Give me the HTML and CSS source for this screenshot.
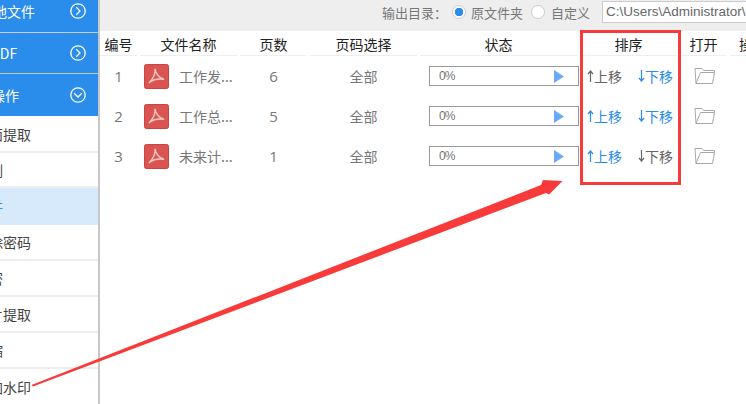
FILE: index.html
```html
<!DOCTYPE html>
<html lang="zh">
<head>
<meta charset="utf-8">
<title>PDF</title>
<link rel="stylesheet" href="styles.css">
</head>
<body>
<div class="app">
  <aside class="side">
    <div class="cat c1"><span class="clip">本地文件</span><svg class="chev" viewBox="0 0 16 16"><circle cx="8" cy="8" r="7.2"/><path d="M6.300 4.200 10 8l-3.700 3.800"/></svg></div>
    <div class="cat c2"><span class="clip">转PDF</span><svg class="chev" viewBox="0 0 16 16"><circle cx="8" cy="8" r="7.2"/><path d="M6.300 4.200 10 8l-3.700 3.800"/></svg></div>
    <div class="cat c3"><span class="clip">页操作</span><svg class="chev" viewBox="0 0 16 16"><circle cx="8" cy="8" r="7.2"/><path d="M4.200 6.300 8 10l3.800-3.700"/></svg></div>
    <div class="item tall"><span class="clip2">页面提取</span></div>
    <div class="item short"><span class="clip2">分割</span></div>
    <div class="item tall on"><span class="clip2">合并</span></div>
    <div class="item"><span class="clip2">解除密码</span></div>
    <div class="item"><span class="clip2">加密</span></div>
    <div class="item"><span class="clip2">图片提取</span></div>
    <div class="item"><span class="clip2">压缩</span></div>
    <div class="item last"><span class="clip2">添加水印</span></div>
  </aside>
  <main class="main">
    <div class="bar">
      <span class="lbl">输出目录：</span>
      <span class="radio sel"></span><span class="opt">原文件夹</span>
      <span class="radio"></span><span class="opt opt2">自定义</span>
      <span class="path">C:\Users\Administrator\Desktop</span>
    </div>
    <div class="grid head">
      <div class="h">编号</div><div class="h">文件名称</div><div class="h">页数</div><div class="h">页码选择</div><div class="h">状态</div><div class="h">排序</div><div class="h">打开</div><div class="h cut">操作</div>
    </div>
    <div class="grid row">
      <div class="num">1</div>
      <div class="file"><svg class="pdf" viewBox="0 0 26 26"><rect x=".5" y=".5" width="25" height="25" rx="2"/><path d="M5 20C9 16 12 10 11.500 5 12 10 16 15 21 16 15 15 10 16 6 19"/></svg><span>工作发...</span></div>
      <div class="num">6</div><div class="cell">全部</div>
      <div class="state"><div class="prog"><span class="pct">0%</span><svg class="play" viewBox="0 0 10 13"><path d="M0 0l10 6.500L0 13z"/></svg></div></div>
      <div class="sort">
        <span class="mv"><svg class="ar" viewBox="0 0 7 12"><path d="M3.500 12V1M1 4l2.500-3L6 4"/></svg>上移</span>
        <span class="mv act"><svg class="ar" viewBox="0 0 7 12"><path d="M3.500 0v11M1 8l2.500 3L6 8"/></svg>下移</span>
      </div>
      <div class="open"><svg class="folder" viewBox="0 0 21 16"><path d="M1 .5h7l1.500 2h11v2M1 .5 2 15.500M2 15.500h16.500l2-11h-14z"/></svg></div>
    </div>
    <div class="grid row">
      <div class="num">2</div>
      <div class="file"><svg class="pdf" viewBox="0 0 26 26"><rect x=".5" y=".5" width="25" height="25" rx="2"/><path d="M5 20C9 16 12 10 11.500 5 12 10 16 15 21 16 15 15 10 16 6 19"/></svg><span>工作总...</span></div>
      <div class="num">5</div><div class="cell">全部</div>
      <div class="state"><div class="prog"><span class="pct">0%</span><svg class="play" viewBox="0 0 10 13"><path d="M0 0l10 6.500L0 13z"/></svg></div></div>
      <div class="sort">
        <span class="mv act"><svg class="ar" viewBox="0 0 7 12"><path d="M3.500 12V1M1 4l2.500-3L6 4"/></svg>上移</span>
        <span class="mv act"><svg class="ar" viewBox="0 0 7 12"><path d="M3.500 0v11M1 8l2.500 3L6 8"/></svg>下移</span>
      </div>
      <div class="open"><svg class="folder" viewBox="0 0 21 16"><path d="M1 .5h7l1.500 2h11v2M1 .5 2 15.500M2 15.500h16.500l2-11h-14z"/></svg></div>
    </div>
    <div class="grid row">
      <div class="num">3</div>
      <div class="file"><svg class="pdf" viewBox="0 0 26 26"><rect x=".5" y=".5" width="25" height="25" rx="2"/><path d="M5 20C9 16 12 10 11.500 5 12 10 16 15 21 16 15 15 10 16 6 19"/></svg><span>未来计...</span></div>
      <div class="num">1</div><div class="cell">全部</div>
      <div class="state"><div class="prog"><span class="pct">0%</span><svg class="play" viewBox="0 0 10 13"><path d="M0 0l10 6.500L0 13z"/></svg></div></div>
      <div class="sort">
        <span class="mv act"><svg class="ar" viewBox="0 0 7 12"><path d="M3.500 12V1M1 4l2.500-3L6 4"/></svg>上移</span>
        <span class="mv"><svg class="ar" viewBox="0 0 7 12"><path d="M3.500 0v11M1 8l2.500 3L6 8"/></svg>下移</span>
      </div>
      <div class="open"><svg class="folder" viewBox="0 0 21 16"><path d="M1 .5h7l1.500 2h11v2M1 .5 2 15.500M2 15.500h16.500l2-11h-14z"/></svg></div>
    </div>
  </main>
  <div class="redbox"></div>
  <svg class="arrow" viewBox="0 0 746 404"><path d="M31.500 385 541 185 543 180 562.500 181 549 194.500 546 193 33 386.500z"/></svg>
</div>
</body>
</html>
```
FILE: styles.css
```css
* { box-sizing: border-box; }
html, body { margin: 0; padding: 0; }
body { width: 746px; height: 404px; overflow: hidden; background: #fff; font-family: "Noto Sans CJK SC", "Liberation Sans", sans-serif; }
.app { position: relative; display: flex; width: 746px; height: 404px; overflow: hidden; }
.side { flex: none; width: 100px; height: 404px; border-right: 2px solid #c8c8c8; overflow: hidden; display: flex; flex-direction: column; }
.cat { display: flex; align-items: center; justify-content: space-between; flex: none; background: #2a8ceb; color: #fff; font-size: 14px; padding-right: 12px; overflow: hidden; }
.c1 { height: 33px; padding-bottom: 10px; border-bottom: 1px solid #c5cdd5; }
.c2 { height: 41px; border-bottom: 1px solid #c5cdd5; }
.c3 { height: 42px; }
.clip { margin-left: -21px; white-space: nowrap; }
.c2 .clip, .c3 .clip { margin-left: -23px; }
.chev { width: 16px; height: 16px; flex: none; fill: none; stroke: #fff; stroke-width: 1.300; }
.item { display: flex; align-items: center; flex: none; height: 36px; font-size: 14px; color: #444; border-bottom: 2px solid #eee; overflow: hidden; }
.item.tall { height: 37px; }
.item.short { height: 35px; }
.item.on { background: #d7eafb; color: #2a8ceb; border-bottom-color: #d7eafb; }
.item.last { border-bottom: 0; }
.clip2 { margin-left: -25px; white-space: nowrap; }
.main { flex: 1; min-width: 0; }
.bar { display: flex; align-items: center; height: 31px; background: #eee; padding: 0 0 7px 282px; font-size: 13px; color: #777; white-space: nowrap; overflow: hidden; }
.lbl { width: 65px; flex: none; margin-right: 5px; }
.radio { flex: none; width: 14px; height: 14px; border-radius: 50%; background: #fff; border: 1px solid #ccc; margin-right: 5px; }
.radio.sel { background: radial-gradient(circle, #2a8ceb 0 4px, #fff 4.500px); }
.opt { flex: none; margin-right: 8px; }
.opt2 { margin-left: 1px; margin-right: 12px; }
.path { flex: none; width: 150px; height: 22px; line-height: 20px; background: #fff; border: 1px solid #ccc; border-right: 0; padding-left: 3px; font-family: "Liberation Sans", sans-serif; font-size: 13.500px; color: #666; overflow: hidden; }
.grid { display: grid; grid-template-columns: 40px 100px 70px 110px 160px 100px 50px 16px; }
.head { height: 25px; }
.h { margin-right: 3px; height: 25px; border-bottom: 1px solid #eee; text-align: center; font-size: 14px; line-height: 27px; color: #222; white-space: nowrap; overflow: hidden; }
.cut { margin-right: 0; text-align: left; text-indent: 9px; overflow: visible; }
.row { height: 40px; align-items: center; font-size: 14px; color: #777; }
.num, .cell { text-align: center; padding-right: 3px; font-size: 14px; color: #777; }
.num { font-family: "Open Sans", "Liberation Sans", sans-serif; font-size: 15px; }
.file { display: flex; align-items: center; padding-left: 4px; gap: 10px; white-space: nowrap; }
.pdf { flex: none; width: 25px; height: 25px; }
.pdf rect { fill: #da5552; stroke: #c83e3c; }
.pdf path { fill: none; stroke: #f6c9c6; stroke-width: 1.400; }
.state { padding-left: 9px; }
.prog { display: flex; align-items: center; justify-content: space-between; width: 150px; height: 20px; border: 1px solid #999; padding: 0 14px 0 9px; color: #777; }
.pct { font-family: "Liberation Sans", sans-serif; font-size: 12px; letter-spacing: -1px; }
.play { width: 10px; height: 13px; fill: #6aaafa; }
.sort { display: flex; gap: 16px; padding-left: 7px; font-size: 14px; color: #666; white-space: nowrap; }
.mv { display: flex; align-items: center; gap: 0; }
.ar { flex: none; width: 7px; height: 12px; fill: none; stroke: currentColor; stroke-width: 1.200; }
.act { color: #2a8ceb; }
.open { padding-left: 14px; display: flex; }
.folder { width: 21px; height: 16px; fill: none; stroke: #a8a8a8; stroke-width: 1; }
.redbox { position: absolute; left: 580px; top: 30px; width: 101px; height: 155px; border: 3px solid #f93a3a; pointer-events: none; }
.arrow { position: absolute; left: 0; top: 0; width: 746px; height: 404px; fill: #f93a3a; pointer-events: none; }
```
